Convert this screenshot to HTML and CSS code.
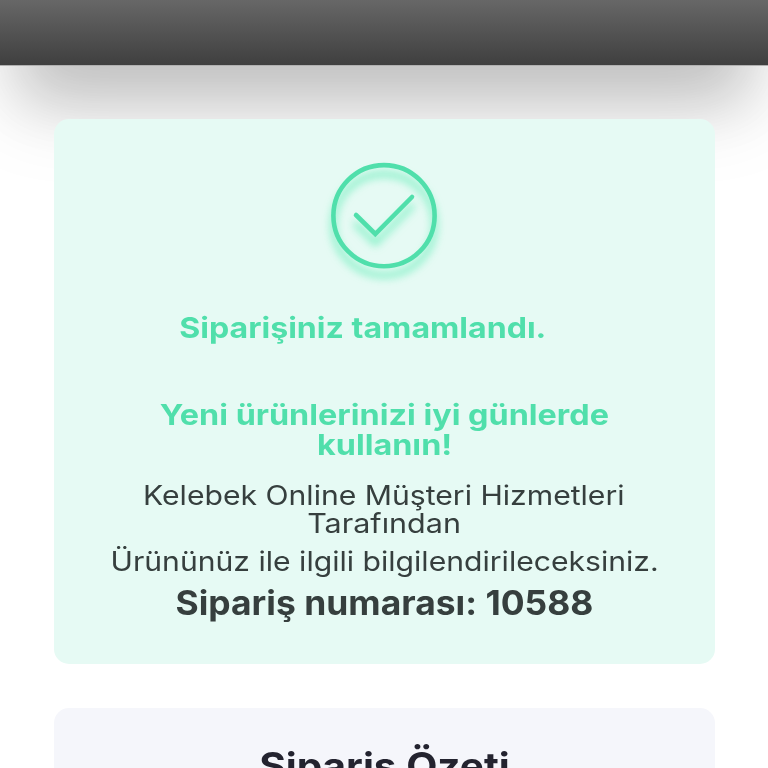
FILE: index.html
```html
<!DOCTYPE html>
<html lang="tr">
<head>
<meta charset="utf-8">
<title>Sipariş tamamlandı</title>
<link rel="stylesheet" href="styles.css">
</head>
<body>
<header class="topbar"></header>
<main class="content">
<section class="card success">
<svg class="check" viewBox="0 0 150 150" fill="none" stroke="#50dfab" stroke-width="4.6" stroke-linecap="round" stroke-linejoin="miter">
<circle cx="75" cy="65.7" r="50.6"/>
<path d="M47 65l19.3 19L103 47"/>
</svg>
<h2 class="lead done"><span class="t1">Siparişiniz tamamlandı.</span></h2>
<h2 class="lead enjoy"><span class="t2">Yeni ürünlerinizi iyi günlerde</span><br><span class="t3">kullanın!</span></h2>
<p class="info contact"><span class="t4">Kelebek Online Müşteri Hizmetleri</span><br><span class="t5">Tarafından</span></p>
<p class="info notice"><span class="t6">Ürününüz ile ilgili bilgilendirileceksiniz.</span></p>
<p class="number"><span class="t7">Sipariş numarası: 10588</span></p>
</section>
<section class="card summary">
<h1 class="title"><span class="t8">Sipariş Özeti</span></h1>
</section>
</main>
</body>
</html>
```
FILE: styles.css
```css
* { box-sizing: border-box; margin: 0; padding: 0; }
html { overflow: hidden; }
body { height: 768px; overflow: hidden; background: #fff; font-family: Inter, "Open Sans", sans-serif; display: flex; flex-direction: column; }
.topbar { flex: none; height: 265px; margin-top: -200px; background: linear-gradient(#676767 200px, #3f3f3f 265px); box-shadow: 0 1px 0 #b0b0b0, 0 54px 84px -16px rgba(0,0,0,.17), 0 58px 52px -20px rgba(0,0,0,.11); }
.content { flex: 1; min-height: 0; overflow: hidden; position: relative; padding: 54px 53px 0 53.5px; display: flex; flex-direction: column; gap: 44px; }
.card { flex: none; border-radius: 15px; text-align: center; white-space: nowrap; }
.card span { display: inline-block; transform: scaleX(1.116); }
.success { height: 545px; background: #e6faf4; color: #363f3e; }
.check { display: block; width: 150px; height: 150px; margin: 31px auto 0; filter: drop-shadow(0 9px 4.5px rgba(70,235,170,.75)); }
.lead { color: #50dfab; font-size: 29px; line-height: 30px; font-weight: 700; }
.done { margin-top: 13px; padding-right: 43px; }
.enjoy { margin-top: 57px; }
.info { font-size: 27px; line-height: 28px; font-weight: 400; }
.contact { margin-top: 22px; }
.notice { margin-top: 10px; }
.number { margin-top: 9px; font-size: 33.5px; line-height: 36px; font-weight: 700; }
.card .t1 { transform: scaleX(1.107); }
.card .t5 { transform: scaleX(1.13); }
.card .t7 { transform: scaleX(1.058); }
.card .t8 { transform: scaleX(1.095); }
.summary { flex: 1; padding-top: 36px; background: #f5f6fb; color: #23232f; border-radius: 15px 15px 0 0; }
.title { font-size: 37px; line-height: 44px; font-weight: 700; }
```
